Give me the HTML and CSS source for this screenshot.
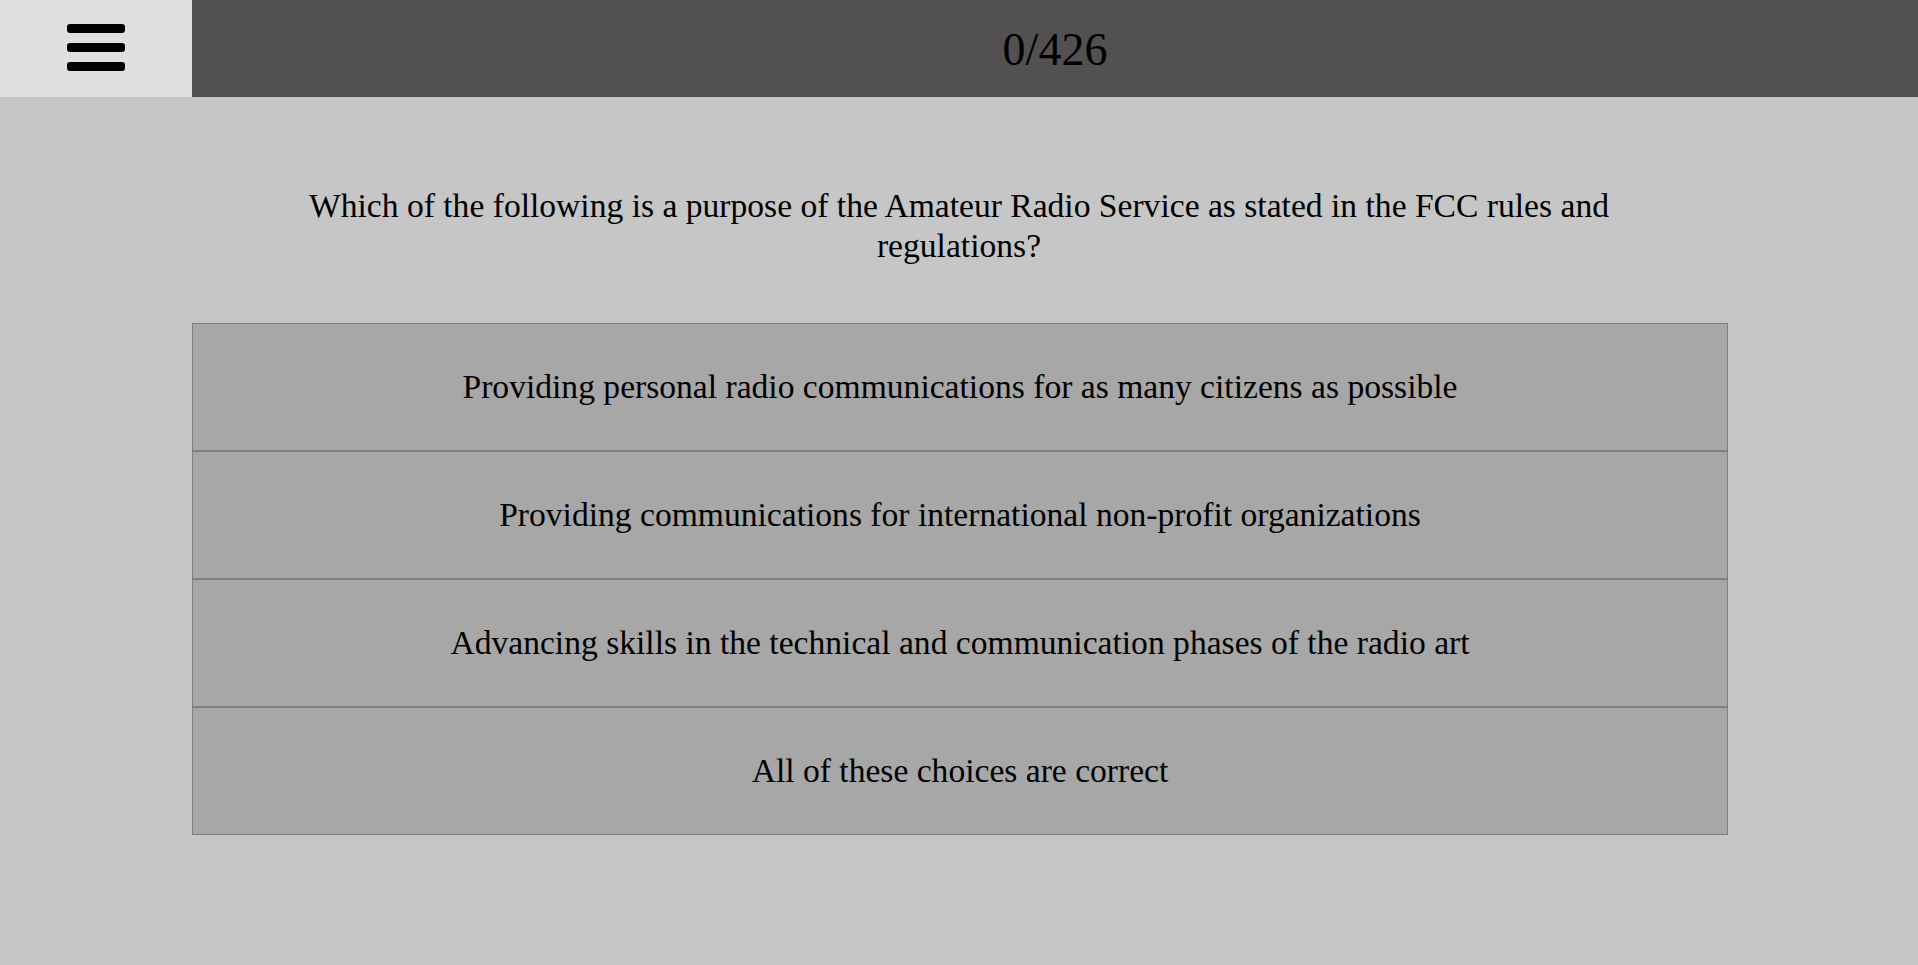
FILE: index.html
```html
<!DOCTYPE html>
<html lang="en">
<head>
<meta charset="utf-8">
<title>Quiz</title>
<link rel="stylesheet" href="styles.css">
</head>
<body>
<header class="topbar">
  <div class="menu-box">
    <div class="hamburger"><span></span><span></span><span></span></div>
  </div>
  <div class="score">0/426</div>
</header>
<main class="quiz">
  <p class="question">Which of the following is a purpose of the Amateur Radio Service as stated in the FCC rules and regulations?</p>
  <div class="options">
    <div class="option">Providing personal radio communications for as many citizens as possible</div>
    <div class="option">Providing communications for international non-profit organizations</div>
    <div class="option">Advancing skills in the technical and communication phases of the radio art</div>
    <div class="option">All of these choices are correct</div>
  </div>
</main>
</body>
</html>
```
FILE: styles.css
```css
html, body {
  margin: 0;
  padding: 0;
}
body {
  background: #c6c6c6;
  font-family: "Liberation Serif", "Times New Roman", serif;
  color: #000;
  min-height: 965px;
}
.topbar {
  display: flex;
  height: 97px;
  background: #525051;
}
.menu-box {
  width: 192px;
  flex: none;
  background: #e0e0e0;
  display: flex;
  align-items: center;
  justify-content: center;
}
.hamburger {
  display: flex;
  flex-direction: column;
  gap: 10px;
  margin-top: -2px;
}
.hamburger span {
  display: block;
  width: 58px;
  height: 9px;
  background: #000;
  border-radius: 3px;
}
.score {
  flex: 1;
  display: flex;
  align-items: center;
  justify-content: center;
  font-size: 46px;
  padding-top: 2px;
}
.quiz {
  display: flex;
  flex-direction: column;
  align-items: center;
}
.question {
  width: 70%;
  margin: 0;
  padding: 89px 0 57px;
  text-align: center;
  font-size: 33.6px;
  line-height: 40px;
}
.options {
  width: 1536px;
  margin-left: 2px;
  display: flex;
  flex-direction: column;
}
.option {
  height: 126px;
  border: 1px solid #808080;
  background: #a7a7a7;
  display: flex;
  align-items: center;
  justify-content: center;
  font-size: 33.6px;
}
```
